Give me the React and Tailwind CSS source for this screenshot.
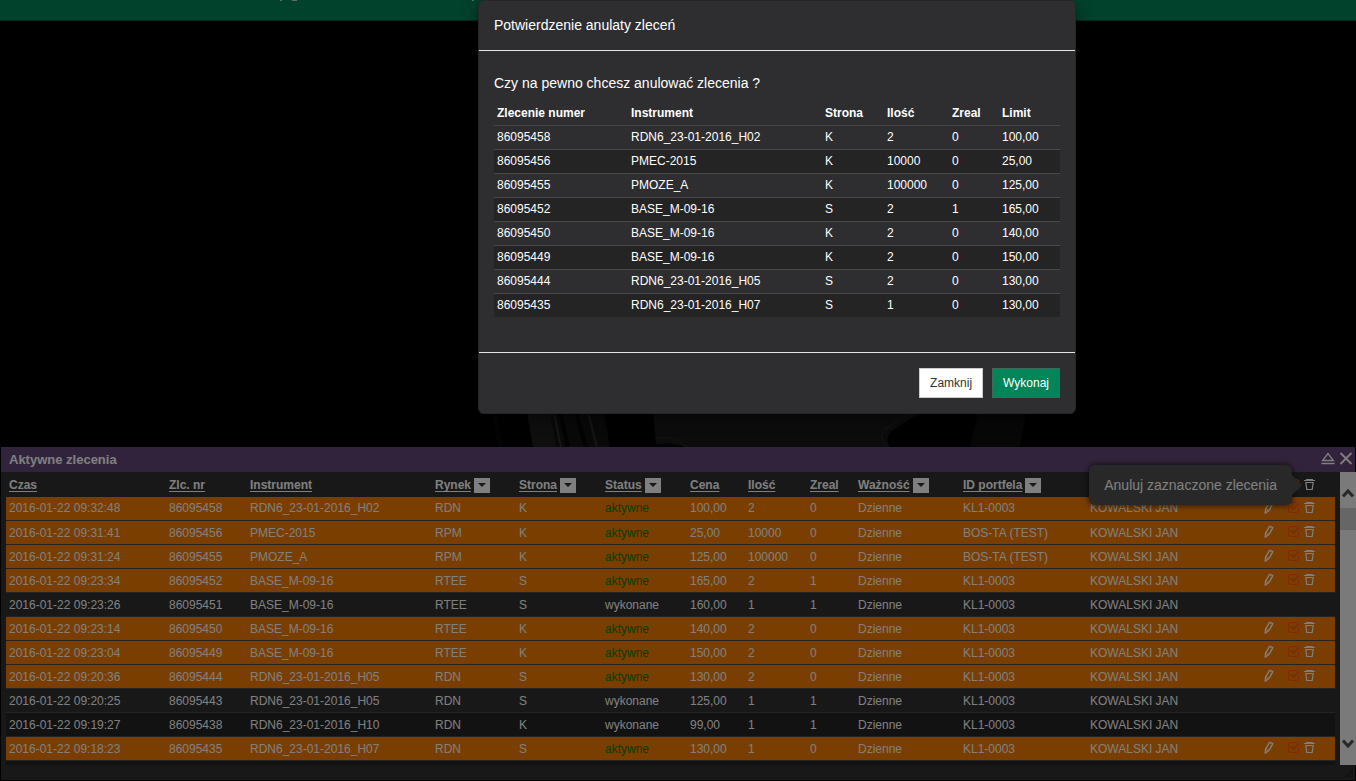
import { useState } from "react";

const orders = [
  { time: "2016-01-22 09:32:48", id: "86095458", instrument: "RDN6_23-01-2016_H02", market: "RDN", side: "K", active: true, price: "100,00", qty: "2", done: "0", portfolio: "KL1-0003" },
  { time: "2016-01-22 09:31:41", id: "86095456", instrument: "PMEC-2015", market: "RPM", side: "K", active: true, price: "25,00", qty: "10000", done: "0", portfolio: "BOS-TA (TEST)" },
  { time: "2016-01-22 09:31:24", id: "86095455", instrument: "PMOZE_A", market: "RPM", side: "K", active: true, price: "125,00", qty: "100000", done: "0", portfolio: "BOS-TA (TEST)" },
  { time: "2016-01-22 09:23:34", id: "86095452", instrument: "BASE_M-09-16", market: "RTEE", side: "S", active: true, price: "165,00", qty: "2", done: "1", portfolio: "KL1-0003" },
  { time: "2016-01-22 09:23:26", id: "86095451", instrument: "BASE_M-09-16", market: "RTEE", side: "S", active: false, price: "160,00", qty: "1", done: "1", portfolio: "KL1-0003" },
  { time: "2016-01-22 09:23:14", id: "86095450", instrument: "BASE_M-09-16", market: "RTEE", side: "K", active: true, price: "140,00", qty: "2", done: "0", portfolio: "KL1-0003" },
  { time: "2016-01-22 09:23:04", id: "86095449", instrument: "BASE_M-09-16", market: "RTEE", side: "K", active: true, price: "150,00", qty: "2", done: "0", portfolio: "KL1-0003" },
  { time: "2016-01-22 09:20:36", id: "86095444", instrument: "RDN6_23-01-2016_H05", market: "RDN", side: "S", active: true, price: "130,00", qty: "2", done: "0", portfolio: "KL1-0003" },
  { time: "2016-01-22 09:20:25", id: "86095443", instrument: "RDN6_23-01-2016_H05", market: "RDN", side: "S", active: false, price: "125,00", qty: "1", done: "1", portfolio: "KL1-0003" },
  { time: "2016-01-22 09:19:27", id: "86095438", instrument: "RDN6_23-01-2016_H10", market: "RDN", side: "K", active: false, price: "99,00", qty: "1", done: "1", portfolio: "KL1-0003" },
  { time: "2016-01-22 09:18:23", id: "86095435", instrument: "RDN6_23-01-2016_H07", market: "RDN", side: "S", active: true, price: "130,00", qty: "1", done: "0", portfolio: "KL1-0003" },
];

const columns = [
  { label: "Czas", width: "w-[160px]" },
  { label: "Zlc. nr", width: "w-[81px]" },
  { label: "Instrument", width: "w-[185px]" },
  { label: "Rynek", width: "w-[84px]", filter: true },
  { label: "Strona", width: "w-[86px]", filter: true },
  { label: "Status", width: "w-[85px]", filter: true },
  { label: "Cena", width: "w-[58px]" },
  { label: "Ilość", width: "w-[62px]" },
  { label: "Zreal", width: "w-[48px]" },
  { label: "Ważność", width: "w-[105px]", filter: true },
  { label: "ID portfela", width: "w-[127px]", filter: true },
];

function PencilIcon() {
  return (
    <svg width="10" height="13" viewBox="0 0 10 13" fill="none" stroke="currentColor" strokeWidth="1.4">
      <path d="M5.6 1.4 8.8 2.6 5 9.6 1.3 12 1.5 8.2Z" />
      <path d="M1.5 8.2 5 9.6" strokeWidth="1" />
    </svg>
  );
}

function CheckIcon() {
  return (
    <svg width="12" height="13" viewBox="0 0 12 13" fill="none" stroke="currentColor" strokeWidth="1">
      <path d="M9.5 1.5h-7q-2 0-2 2v6q0 2 2 2h6q2 0 2-2V6.5" />
      <path d="M3 5.5 5.5 8 11 2.5" strokeWidth="1.4" />
    </svg>
  );
}

function TrashIcon() {
  return (
    <svg width="11" height="13" viewBox="0 0 11 13" fill="none" stroke="currentColor" strokeWidth="1">
      <path d="M2 1.5h7M0 2.5h11" />
      <path d="M1.8 4.5 2.8 11.5h5.4L9.2 4.5Z" strokeWidth="1.2" />
    </svg>
  );
}

function Wheel() {
  return (
    <svg className="absolute bottom-0 left-[478px]" width="560" height="34" viewBox="0 0 560 34" fill="none">
      <path d="M14 0 20 34H26L19 0Z" fill="#080808" />
      <path d="M49 0 55 34H132L126 0Z" fill="#121212" />
      <path d="M49 0 55 34H78L72 0Z" fill="#1e1e1e" />
      <path d="M76 0 83 34M110 0 119 34" stroke="#2c2c2c" strokeWidth="2" />
      <path d="M82 0 90 34M98 0 108 34" stroke="#060606" strokeWidth="4" />
      <path d="M175 0 178 31Q197 29 206 34H412Q404 22 420 14 430 6 446 0Z" fill="#181818" />
      <path d="M178 26Q198 21 208 34M410 34Q396 22 414 12 424 4 436 0" stroke="#202020" strokeWidth="2" />
      <path d="M500 0 492 34H542L548 0Z" fill="#0e0e0e" />
    </svg>
  );
}

function OrdersPanel() {
  return (
    <section className="mx-px mb-px bg-[#303030] text-xs leading-4 text-white">
      <div className="flex h-[25px] items-center justify-between bg-[#634778] pl-2 pr-0.5">
        <h2 className="pt-0.5 text-[13px] font-bold">Aktywne zlecenia</h2>
        <div className="flex gap-1">
          <button type="button" aria-label="Zwiń">
            <svg width="14" height="14" viewBox="0 0 14 14" fill="none" stroke="currentColor" strokeWidth="1.3">
              <path d="M7 1.5 1.6 8.5h10.8ZM.5 11.5h13" />
            </svg>
          </button>
          <button type="button" aria-label="Zamknij panel">
            <svg width="14" height="14" viewBox="0 0 14 14" fill="none" stroke="currentColor" strokeWidth="1.8">
              <path d="M1.5 1 12.5 12M12.5 1 1.5 12" />
            </svg>
          </button>
        </div>
      </div>

      <div className="-mr-px flex">
        <div className="flex-1 px-[5px]">
          <table className="w-full table-fixed border-collapse text-left">
            <thead>
              <tr className="h-[25px]">
                {columns.map((c) => (
                  <th key={c.label} className={`${c.width} px-[3px] pb-0 pt-0.5`}>
                    <div className="flex items-center gap-[3px]">
                      <a href="#" className="whitespace-nowrap underline underline-offset-2">{c.label}</a>
                      {c.filter && (
                        <button type="button" aria-label={`Filtr ${c.label}`} className="flex h-[15px] w-4 items-center justify-center bg-white text-[#303030]">
                          <svg width="8" height="4" viewBox="0 0 8 4" fill="currentColor"><path d="M0 0h8L4 4Z" /></svg>
                        </button>
                      )}
                    </div>
                  </th>
                ))}
                <th className="w-[173px]" />
                <th className="px-0 pb-0 pt-0.5">
                  <div className="relative flex items-center justify-end gap-1 pr-5">
                    <button type="button" aria-label="Zaznacz wszystkie" className="pb-0.5 text-[#ff5000]"><CheckIcon /></button>
                    <button type="button" aria-label="Anuluj zaznaczone" className="pb-0.5"><TrashIcon /></button>
                    <div role="tooltip" className="absolute right-[43px] top-1/2 z-10 -translate-y-1/2 whitespace-nowrap rounded-md bg-[#505050] px-[15px] py-2.5 text-sm font-normal leading-5 shadow-[0_0_6px_rgba(0,0,0,0.8)]">
                      Anuluj zaznaczone zlecenia
                      <span className="absolute left-full top-1/2 -translate-y-1/2 border-y-10 border-l-10 border-y-transparent border-l-[#505050]" />
                    </div>
                  </div>
                </th>
              </tr>
            </thead>
            <tbody>
              {orders.map((o) => (
                <tr key={o.id} className={`h-6 border-b border-[#484848] ${o.active ? "bg-[#f57c00]" : "bg-[#303030] even:bg-[#242424]"}`}>
                  <td className="px-[3px] py-0">{o.time}</td>
                  <td className="px-[3px] py-0">{o.id}</td>
                  <td className="px-[3px] py-0">{o.instrument}</td>
                  <td className="px-[3px] py-0">{o.market}</td>
                  <td className="px-[3px] py-0">{o.side}</td>
                  <td className={`px-[3px] py-0 ${o.active ? "text-[#008000]" : ""}`}>{o.active ? "aktywne" : "wykonane"}</td>
                  <td className="px-[3px] py-0">{o.price}</td>
                  <td className="px-[3px] py-0">{o.qty}</td>
                  <td className="px-[3px] py-0">{o.done}</td>
                  <td className="px-[3px] py-0">Dzienne</td>
                  <td className="px-[3px] py-0">{o.portfolio}</td>
                  <td className="px-[3px] py-0">KOWALSKI JAN</td>
                  <td className="px-0 pb-0.5 pt-0">
                    {o.active && (
                      <div className="flex items-center justify-end gap-1 pr-5">
                        <button type="button" aria-label={`Edytuj ${o.id}`} className="mr-2.5"><PencilIcon /></button>
                        <button type="button" aria-label={`Zaznacz ${o.id}`} className="text-[#ff5000]"><CheckIcon /></button>
                        <button type="button" aria-label={`Anuluj ${o.id}`}><TrashIcon /></button>
                      </div>
                    )}
                  </td>
                </tr>
              ))}
            </tbody>
          </table>
          <div className="h-1 bg-[#242424]" />
        </div>

        {/* Scrollbar */}
        <div className="flex w-4 flex-col items-center justify-between bg-[#f4f4f4] pb-4 pt-4 text-[#505050]">
          <div className="flex w-full flex-col items-center gap-2.5">
            <svg width="12" height="10" viewBox="0 0 12 10" fill="none" stroke="currentColor" strokeWidth="3"><path d="M1 8.5 6 3 11 8.5" /></svg>
            <div className="h-[22px] w-full bg-[#cdcdcd]" />
          </div>
          <svg width="12" height="10" viewBox="0 0 12 10" fill="none" stroke="currentColor" strokeWidth="3"><path d="M1 1.5 6 7 11 1.5" /></svg>
        </div>
      </div>

      <div className="flex h-[15px] items-center justify-end pr-0.5">
        <svg width="8" height="8" viewBox="0 0 8 8" stroke="#181818"><path d="M0 8 8 0M3 8 8 3M6 8 8 6" /></svg>
      </div>
    </section>
  );
}

function CancelDialog({ onClose }) {
  const rows = orders.filter((o) => o.active);

  return (
    <div className="absolute inset-0 z-20 flex items-start justify-center bg-black/50 pl-[198px]">
      <div role="dialog" aria-labelledby="cancel-title" className="w-full max-w-[598px] rounded-md border border-[#262626] bg-[#2e2e30] text-white shadow-[0_5px_15px_rgba(0,0,0,0.5)]">
        <div className="border-b border-[#e5e5e5] px-[15px] pb-[15px] pt-3.5">
          <h1 id="cancel-title" className="text-sm leading-5">Potwierdzenie anulaty zleceń</h1>
        </div>
        <div className="px-[15px] pb-[35px] pt-[22px]">
          <p className="pb-2 text-sm leading-5">Czy na pewno chcesz anulować zlecenia ?</p>
          <table className="w-full table-fixed border-collapse text-left text-xs leading-4">
            <thead>
              <tr className="h-6 border-b border-[#484848]">
                <th className="w-[134px] px-[3px] py-0">Zlecenie numer</th>
                <th className="w-[194px] px-[3px] py-0">Instrument</th>
                <th className="w-[62px] px-[3px] py-0">Strona</th>
                <th className="w-[65px] px-[3px] py-0">Ilość</th>
                <th className="w-[50px] px-[3px] py-0">Zreal</th>
                <th className="px-[3px] py-0">Limit</th>
              </tr>
            </thead>
            <tbody>
              {rows.map((o) => (
                <tr key={o.id} className="h-6 border-b border-[#484848] last:border-b-0 even:bg-[#242424]">
                  <td className="px-[3px] py-0">{o.id}</td>
                  <td className="px-[3px] py-0">{o.instrument}</td>
                  <td className="px-[3px] py-0">{o.side}</td>
                  <td className="px-[3px] py-0">{o.qty}</td>
                  <td className="px-[3px] py-0">{o.done}</td>
                  <td className="px-[3px] py-0">{o.price}</td>
                </tr>
              ))}
            </tbody>
          </table>
        </div>
        <div className="flex justify-end gap-[9px] border-t border-[#e5e5e5] p-[15px] text-xs leading-4">
          <button type="button" onClick={onClose} className="border border-[#cccccc] bg-white px-2.5 py-1.5 text-[#333333]">Zamknij</button>
          <button type="button" onClick={onClose} className="border border-[#3a6b56] bg-[#008458] px-2.5 py-1.5">Wykonaj</button>
        </div>
      </div>
    </div>
  );
}

export default function App() {
  const [open, setOpen] = useState(true);

  return (
    <div className="relative flex min-h-screen flex-col bg-black font-['Liberation_Sans',Arial,sans-serif]">
      <header className="h-[21px] border-b border-[#0c5038] bg-[#008458]">
        <svg width="480" height="2" viewBox="0 0 480 2" fill="#c8d8d0">
          <path d="M280 0h2v1h-2ZM292 0h5v1h-5ZM472 0h2v1h-2Z" />
        </svg>
      </header>
      <main className="relative flex-1 overflow-hidden">
        <Wheel />
      </main>
      <OrdersPanel />
      {open && <CancelDialog onClose={() => setOpen(false)} />}
    </div>
  );
}
